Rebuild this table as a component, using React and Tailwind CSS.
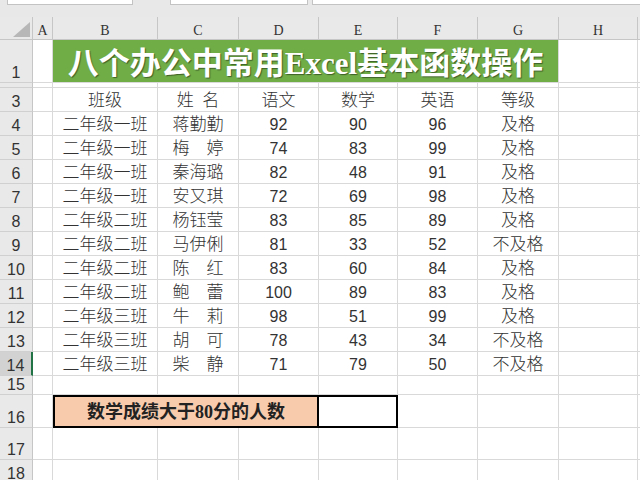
const W = [33, 20, 105, 81, 80, 79, 80, 81, 79]
const LETTERS = ['A', 'B', 'C', 'D', 'E', 'F', 'G', 'H']

const rows = [
  ['二年级一班', '蒋勤勤', 92, 90, 96, '及格'],
  ['二年级一班', '梅　婷', 74, 83, 99, '及格'],
  ['二年级一班', '秦海璐', 82, 48, 91, '及格'],
  ['二年级一班', '安又琪', 72, 69, 98, '及格'],
  ['二年级二班', '杨钰莹', 83, 85, 89, '及格'],
  ['二年级二班', '马伊俐', 81, 33, 52, '不及格'],
  ['二年级二班', '陈　红', 83, 60, 84, '及格'],
  ['二年级二班', '鲍　蕾', 100, 89, 83, '及格'],
  ['二年级三班', '牛　莉', 98, 51, 99, '及格'],
  ['二年级三班', '胡　可', 78, 43, 34, '不及格'],
  ['二年级三班', '柴　静', 71, 79, 50, '不及格'],
]

const cjk = "font-['Liberation_Serif','Noto_Sans_CJK_SC',serif]"
const num = "font-['Liberation_Sans',Arial,sans-serif]"

function RowHead({ n, h, selected }) {
  return (
    <div
      style={{ width: W[0], height: h }}
      className={`shrink-0 flex items-end justify-center pb-[1px] border-b border-[#d0d0d0] text-[16px] leading-none text-[#333] ${num} ${
        selected ? 'bg-[#d2d2d2] border-r-2 border-r-[#217346]' : 'bg-[#e9e9e9] border-r border-r-[#c6c6c6]'
      }`}
    >
      {n}
    </div>
  )
}

function Cell({ w, h, children, className = '' }) {
  return (
    <div
      style={{ width: w, height: h }}
      className={`shrink-0 flex items-end justify-center pb-[2px] border-r border-b border-[#d9d9d9] text-[#333] leading-none ${className}`}
    >
      {children}
    </div>
  )
}

function Blank({ n, h }) {
  return (
    <div className="flex">
      <RowHead n={n} h={h} />
      {W.slice(1).map((w, i) => (
        <Cell key={i} w={w} h={h} />
      ))}
      <div style={{ height: h }} className="flex-1 border-b border-[#d9d9d9]" />
    </div>
  )
}

function DataRow({ n, cells, selected }) {
  return (
    <div className="flex">
      <RowHead n={n} h={24} selected={selected} />
      <Cell w={W[1]} h={24} />
      {cells.map((c, i) => (
        <Cell
          key={i}
          w={W[i + 2]}
          h={24}
          className={typeof c === 'number' ? `${num} text-[16px]` : `${cjk} text-[17px] font-light`}
        >
          {c}
        </Cell>
      ))}
      <Cell w={W[8]} h={24} />
      <div className="h-[24px] flex-1 border-b border-[#d9d9d9]" />
    </div>
  )
}

export default function App() {
  return (
    <div className="w-[640px] h-[480px] overflow-hidden bg-white">
      {/* formula bar remnants */}
      <div className="h-[17px] bg-[#e8e8e8] flex items-start pl-[7px]">
        <div className="w-[126px] h-[5px] bg-white border-x border-b border-[#c3c3c3]" />
        <div className="ml-[37px] w-[138px] h-[5px] bg-white border-x border-b border-[#c3c3c3]" />
        <div className="ml-[4px] flex-1 h-[5px] bg-white border-l border-b border-[#c3c3c3]" />
      </div>

      {/* column headers */}
      <div className="flex h-[23px] bg-[#e9e9e9] border-b border-[#c6c6c6]">
        <div style={{ width: W[0] }} className="shrink-0 relative border-r border-[#c6c6c6]">
          <svg className="absolute left-[13px] top-[5px]" width="17" height="15" viewBox="0 0 17 15">
            <polygon points="17,0 17,15 0,15" fill="#b7b7b7" />
          </svg>
        </div>
        {LETTERS.map((l, i) => (
          <div
            key={l}
            style={{ width: W[i + 1] }}
            className="shrink-0 flex items-center justify-center pt-[5px] border-r border-[#c6c6c6] font-['Liberation_Serif',serif] text-[14px] text-[#333]"
          >
            {l}
          </div>
        ))}
      </div>

      {/* row 1 title */}
      <div className="flex">
        <RowHead n={1} h={43} />
        <Cell w={W[1]} h={43} />
        <div className="shrink-0 w-[506px] h-[43px] bg-[#70ad47] border-r border-b border-[#d9d9d9] flex items-center justify-center pt-[4px]">
          <span className="font-['Liberation_Serif','Noto_Sans_CJK_SC',serif] font-bold text-[31px] leading-none text-white [text-shadow:1px_1px_1px_rgba(0,0,0,0.45)]">
            八个办公中常用Excel基本函数操作
          </span>
        </div>
        <Cell w={W[8]} h={43} />
        <div className="h-[43px] flex-1 border-b border-[#d9d9d9]" />
      </div>

      {/* hidden-ish row 2 */}
      <Blank n="" h={5} />

      {/* header row 3 */}
      <DataRow n={3} cells={['班级', '姓\u2002名', '语文', '数学', '英语', '等级']} />
      {rows.map((r, i) => (
        <DataRow key={i} n={i + 4} cells={r} selected={i + 4 === 14} />
      ))}

      <Blank n={15} h={19} />

      {/* row 16 */}
      <div className="flex">
        <RowHead n={16} h={33} />
        <Cell w={W[1]} h={33} />
        <div className="shrink-0 w-[266px] h-[33px] bg-[#f8cbad] border-2 border-black flex items-center justify-center">
          <span className={`${cjk} font-bold text-[18px] leading-none text-[#222]`}>数学成绩大于80分的人数</span>
        </div>
        <div className="shrink-0 w-[79px] h-[33px] border-y-2 border-r-2 border-black" />
        <Cell w={W[6]} h={33} />
        <Cell w={W[7]} h={33} />
        <Cell w={W[8]} h={33} />
        <div className="h-[33px] flex-1 border-b border-[#d9d9d9]" />
      </div>

      <Blank n={17} h={32} />
      <Blank n={18} h={24} />
    </div>
  )
}
